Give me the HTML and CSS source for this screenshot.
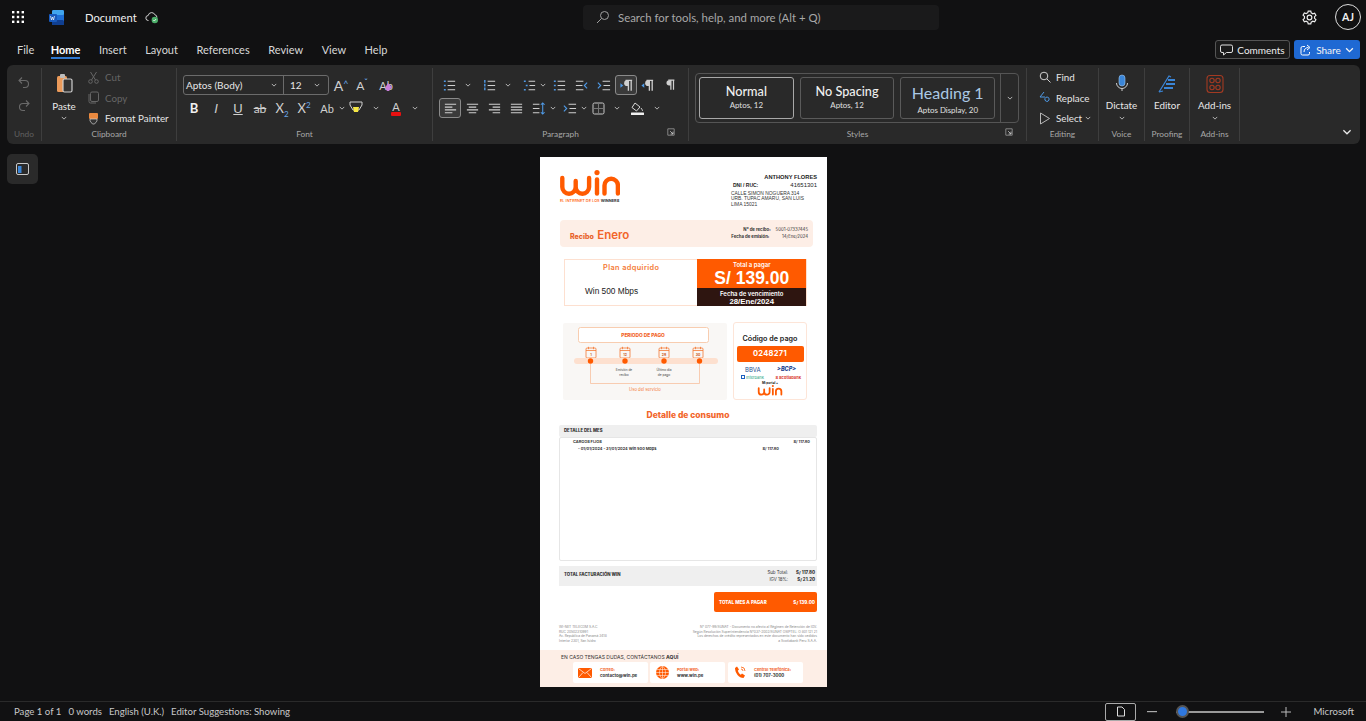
FILE: index.html
```html
<!DOCTYPE html>
<html lang="en">
<head>
	<meta charset="UTF-8">
	<title>Document</title>
	<link rel="stylesheet" href="styles.css">
</head>
<body>
	<svg class="sprite" aria-hidden="true">
		<symbol id="chev" viewBox="0 0 8 5"><path d="M1 1l3 3 3-3" fill="none" stroke="currentColor" stroke-width="1.1"/></symbol>
		<symbol id="list" viewBox="0 0 16 16"><g fill="none" stroke-width="1.2"><path d="M6 3.5h8M6 8h8M6 12.5h8" stroke="#cfcfcf"/><path d="M2 3.5h2M2 8h2M2 12.5h2" stroke="#4f9be8" stroke-width="1.6"/></g></symbol>
		<symbol id="numlist" viewBox="0 0 16 16"><g fill="none" stroke-width="1.2"><path d="M6 3.5h8M6 8h8M6 12.5h8" stroke="#cfcfcf"/><path d="M3 2v12" stroke="#4f9be8" stroke-width="1.5" stroke-dasharray="3 1"/></g></symbol>
		<symbol id="multi" viewBox="0 0 16 16"><g fill="none" stroke-width="1.2"><path d="M7 3.5h7M8 8h6M7 12.5h7" stroke="#cfcfcf"/><path d="M2 3.5h2M4 8h2M2 12.5h2" stroke="#4f9be8" stroke-width="1.5"/></g></symbol>
		<symbol id="outdent" viewBox="0 0 16 16"><g fill="none" stroke-width="1.2"><path d="M2 3.5h8M2 8h7M2 12.5h8" stroke="#cfcfcf"/><path d="M14 5l-3 3 3 3" stroke="#4f9be8"/></g></symbol>
		<symbol id="indent" viewBox="0 0 16 16"><g fill="none" stroke-width="1.2"><path d="M7 3.5h8M8 8h7M7 12.5h8" stroke="#cfcfcf"/><path d="M2 5l3 3-3 3" stroke="#4f9be8"/></g></symbol>
		<symbol id="pilcrow" viewBox="0 0 16 16"><path d="M6 2.5h7M9 2.5v11M12 2.5v11" fill="none" stroke="#cfcfcf" stroke-width="1.4"/><path d="M9 2.5H7a3 3 0 0 0 0 6h2z" fill="#cfcfcf"/></symbol>
		<symbol id="pil-ltr" viewBox="0 0 16 16"><path d="M7 2.5h7M10 2.5v11M13 2.5v11" fill="none" stroke="#cfcfcf" stroke-width="1.4"/><path d="M10 2.5H8.500a3 3 0 0 0 0 6H10z" fill="#cfcfcf"/><path d="M1.500 5.500l3 2.500-3 2.500z" fill="#4f9be8"/></symbol>
		<symbol id="pil-rtl" viewBox="0 0 16 16"><path d="M7 2.5h7M10 2.5v11M13 2.5v11" fill="none" stroke="#cfcfcf" stroke-width="1.4"/><path d="M10 2.5H8.500a3 3 0 0 0 0 6H10z" fill="#cfcfcf"/><path d="M4.500 5.500l-3 2.500 3 2.500z" fill="#4f9be8"/></symbol>
		<symbol id="left" viewBox="0 0 16 16"><path d="M2 3.5h12M2 6.5h8M2 9.5h12M2 12.5h8" fill="none" stroke="#cfcfcf" stroke-width="1.2"/></symbol>
		<symbol id="center" viewBox="0 0 16 16"><path d="M2 3.5h12M4 6.5h8M2 9.5h12M4 12.5h8" fill="none" stroke="#cfcfcf" stroke-width="1.2"/></symbol>
		<symbol id="right" viewBox="0 0 16 16"><path d="M2 3.5h12M6 6.5h8M2 9.5h12M6 12.5h8" fill="none" stroke="#cfcfcf" stroke-width="1.2"/></symbol>
		<symbol id="justify" viewBox="0 0 16 16"><path d="M2 3.5h12M2 6.5h12M2 9.5h12M2 12.5h12" fill="none" stroke="#cfcfcf" stroke-width="1.2"/></symbol>
		<symbol id="launch" viewBox="0 0 10 10"><path d="M1 1h8v8H1z" fill="none" stroke="#9a9a9a"/><path d="M4 4l3.5 3.5M7.500 4.500v3h-3" fill="none" stroke="#d0d0d0"/></symbol>
		<symbol id="logo" viewBox="0 0 60 27"><g fill="none" stroke="#ff5a00" stroke-width="4.4" stroke-linecap="round"><path d="M2.300 8v9a6.700 6.700 0 0 0 13.400 0V11M15.700 17a6.700 6.700 0 0 0 13.400 0V8"/><path d="M37 9.500v14"/><path d="M44.500 23.500V15.500a6.700 6.700 0 0 1 13.400 0v8"/></g><circle cx="37" cy="2.600" r="2.600" fill="#ff5a00"/></symbol>
		<symbol id="cal" viewBox="0 0 12 13"><g fill="none" stroke="#f47a35" stroke-width=".8"><rect x="1" y="2" width="10" height="10" rx="1"/><path d="M1 4.500h10M3.500 .8v2.400M8.500 .8v2.400"/></g></symbol>
	</svg>

	<div class="app">
		<header class="topbar">
			<svg class="waffle" width="12" height="12" viewBox="0 0 12 12" fill="#fff"><rect width="2.400" height="2.400"/><rect x="4.800" width="2.400" height="2.400"/><rect x="9.600" width="2.400" height="2.400"/><rect y="4.800" width="2.400" height="2.400"/><rect x="4.800" y="4.800" width="2.400" height="2.400"/><rect x="9.600" y="4.800" width="2.400" height="2.400"/><rect y="9.600" width="2.400" height="2.400"/><rect x="4.800" y="9.600" width="2.400" height="2.400"/><rect x="9.600" y="9.600" width="2.400" height="2.400"/></svg>
			<svg class="wordmark" width="15" height="15" viewBox="0 0 15 15"><rect x="3" y="0" width="12" height="15" rx="1.500" fill="#1f6fd6"/><rect x="3" y="0" width="12" height="5" rx="1.500" fill="#41a5ee"/><rect x="3" y="10" width="12" height="5" rx="1.500" fill="#103f91"/><rect x="0" y="4" width="8" height="8" rx="1" fill="#185abd"/><path d="M1.500 6l1 4 1-3 1 3 1-4" fill="none" stroke="#fff" stroke-width=".7"/></svg>
			<span class="docname">Document</span>
			<svg class="cloud" width="14" height="13" viewBox="0 0 14 13"><path d="M3.500 9.500a2.500 2.500 0 0 1-.3-5 3.500 3.500 0 0 1 6.700-.7 2.500 2.500 0 0 1 2 2.700" fill="none" stroke="#d0d0d0"/><circle cx="9.800" cy="9" r="3.200" fill="#4caf6a"/><path d="M8.300 9l1 1 1.800-2" fill="none" stroke="#fff" stroke-width=".8"/></svg>
			<div class="search">
				<svg width="14" height="14" viewBox="0 0 14 14" fill="none" stroke="#a0a0a0" stroke-width="1"><circle cx="8.500" cy="5.500" r="4"/><path d="M5.500 8.500L1 13"/></svg>
				<span>Search for tools, help, and more (Alt + Q)</span>
			</div>
			<svg class="gear" width="15" height="15" viewBox="0 0 14 14" fill="none" stroke="#eee" stroke-width="1.100"><circle cx="7" cy="7" r="2.200"/><path d="M5.800 1h2.400l.4 1.700 1.500.8 1.700-.5 1.200 2-1.300 1.200v1.600l1.300 1.200-1.200 2-1.700-.5-1.500.8-.4 1.700H5.800l-.4-1.700-1.500-.8-1.700.5-1.200-2 1.300-1.200V6L1 4.800l1.200-2 1.700.5 1.500-.8z"/></svg>
			<div class="avatar">AJ</div>
		</header>

		<nav class="tabsbar">
			<span class="tab tab-file">File</span>
			<span class="tab active">Home</span>
			<span class="tab">Insert</span>
			<span class="tab">Layout</span>
			<span class="tab">References</span>
			<span class="tab">Review</span>
			<span class="tab">View</span>
			<span class="tab">Help</span>
			<button type="button" class="comments">
				<svg width="13" height="12" viewBox="0 0 13 12" fill="none" stroke="#e0e0e0"><path d="M2 1h9a1.500 1.500 0 0 1 1.500 1.500v4.500a1.500 1.500 0 0 1-1.500 1.500H6.500L3.500 11V8.500H2A1.500 1.500 0 0 1 .5 7V2.500A1.500 1.500 0 0 1 2 1z"/></svg>
				Comments
			</button>
			<button type="button" class="share">
				<svg width="12" height="12" viewBox="0 0 12 12" fill="none" stroke="#fff"><path d="M5 2.500H2.500A1.500 1.500 0 0 0 1 4v5.500A1.500 1.500 0 0 0 2.500 11H8a1.500 1.500 0 0 0 1.500-1.500V8M4 8c0-3 2-4.500 4.500-4.500M7 1l3 2.500L7 6"/></svg>
				Share
				<svg width="9" height="6" viewBox="0 0 8 5"><use href="#chev"/></svg>
			</button>
		</nav>

		<section class="ribbon">
			<div class="group g-undo">
				<div class="stack">
					<svg width="14" height="14" viewBox="0 0 14 14" fill="none" stroke="#6a6a6a" stroke-width="1.100"><path d="M5 1.500L2 4.500l3 3M2 4.500h6a3.500 3.500 0 0 1 0 7H6"/></svg>
					<svg width="14" height="14" viewBox="0 0 14 14" fill="none" stroke="#6a6a6a" stroke-width="1.100"><path d="M9 1.500l3 3-3 3M12 4.500H6a3.500 3.500 0 0 0 0 7h2"/></svg>
				</div>
				<div class="glabel dim">Undo</div>
			</div>

			<div class="group g-clip">
				<div class="clipbody">
					<div class="bigbtn paste">
						<svg width="17" height="20" viewBox="0 0 17 20"><rect x="1" y="2" width="10" height="16" rx="1.500" fill="#eb9a5a"/><rect x="4" y="0" width="5" height="4" rx="1" fill="#bdbdbd"/><rect x="7" y="5" width="9" height="13" rx="1.500" fill="#333" stroke="#cfcfcf" stroke-width="1.200"/></svg>
						<span>Paste</span>
						<svg class="chev" viewBox="0 0 8 5"><use href="#chev"/></svg>
					</div>
					<div class="cliplist">
						<div class="clipitem dim">
							<svg width="11" height="13" viewBox="0 0 11 13" fill="none" stroke="#666"><circle cx="2.500" cy="10.500" r="1.800"/><circle cx="8.500" cy="10.500" r="1.800"/><path d="M3.500 9L8.500 1M7.500 9L2.500 1"/></svg>
							<span>Cut</span>
						</div>
						<div class="clipitem dim">
							<svg width="11" height="13" viewBox="0 0 11 13" fill="none" stroke="#666"><rect x="2.500" y="1" width="8" height="9.500" rx="1.500"/><path d="M1 3v7.500A1.500 1.500 0 0 0 2.500 12H8"/></svg>
							<span>Copy</span>
						</div>
						<div class="clipitem">
							<svg width="11" height="13" viewBox="0 0 11 13"><rect x="1" y="1" width="9" height="6" rx="1" fill="#e9893f"/><path d="M2 7h7v2L6.500 12H4.500L2 9z" fill="#333" stroke="#cfcfcf" stroke-width=".7"/></svg>
							<span>Format Painter</span>
						</div>
					</div>
				</div>
				<div class="glabel">Clipboard</div>
			</div>

			<div class="group g-font">
				<div class="row">
					<div class="fontbox">
						<span class="fname">Aptos (Body)</span>
						<svg class="chev" viewBox="0 0 8 5"><use href="#chev"/></svg>
						<span class="fsize">12</span>
						<svg class="chev" viewBox="0 0 8 5"><use href="#chev"/></svg>
					</div>
					<span class="cell w22"><span class="txt-a">A<i class="sup-b">^</i></span></span>
					<span class="cell w22"><span class="txt-a small">A<i class="sup-b low">ˇ</i></span></span>
					<span class="cell w22 clear-fmt"><span class="txt-s">Ab</span><svg class="eraser" width="8" height="8" viewBox="0 0 8 8"><path d="M4 0l4 4-3 4H3L1 5z" fill="#c77fd8"/></svg></span>
				</div>
				<div class="row">
					<span class="cell w22"><b class="txt-b">B</b></span>
					<span class="cell w22"><i class="txt-i">I</i></span>
					<span class="cell w22"><u class="txt-u">U</u></span>
					<span class="cell w22"><s class="txt-st">ab</s></span>
					<span class="cell w22"><span class="txt-x">X<sub>2</sub></span></span>
					<span class="cell w22"><span class="txt-x">X<sup>2</sup></span></span>
					<span class="cell w22 ml1"><span class="txt-s">Ab</span></span>
					<span class="cell w7"><svg class="chev" viewBox="0 0 8 5"><use href="#chev"/></svg></span>
					<span class="cell w22">
						<svg width="14" height="15" viewBox="0 0 14 15"><path d="M1 1h12v3l-3 5H4L1 4z" fill="none" stroke="#d0d0d0"/><path d="M4 6h6l-1 5H5z" fill="#f5e642"/></svg>
					</span>
					<span class="cell w16 ml1"><svg class="chev" viewBox="0 0 8 5"><use href="#chev"/></svg></span>
					<span class="cell w22 ml1 fontcolor"><span class="txt-s">A</span><i class="redbar"></i></span>
					<span class="cell w16"><svg class="chev" viewBox="0 0 8 5"><use href="#chev"/></svg></span>
				</div>
				<div class="glabel">Font</div>
			</div>

			<div class="group g-para">
				<div class="row">
					<span class="cell w22"><svg width="15" height="15"><use href="#list"/></svg></span>
					<span class="cell w16"><svg class="chev" viewBox="0 0 8 5"><use href="#chev"/></svg></span>
					<span class="cell w22 ml2"><svg width="15" height="15"><use href="#numlist"/></svg></span>
					<span class="cell w16"><svg class="chev" viewBox="0 0 8 5"><use href="#chev"/></svg></span>
					<span class="cell w20 ml3"><svg width="15" height="15"><use href="#multi"/></svg></span>
					<span class="cell w7"><svg class="chev" viewBox="0 0 8 5"><use href="#chev"/></svg></span>
					<span class="cell w22 ml2"><svg width="15" height="15"><use href="#list"/></svg></span>
					<span class="cell w22"><svg width="15" height="15"><use href="#outdent"/></svg></span>
					<span class="cell w22"><svg width="15" height="15"><use href="#indent"/></svg></span>
					<span class="cell w22 ml1 on"><svg width="15" height="15"><use href="#pil-ltr"/></svg></span>
					<span class="cell w21"><svg width="15" height="15"><use href="#pil-rtl"/></svg></span>
					<span class="cell w22 ml1"><svg width="14" height="14"><use href="#pilcrow"/></svg></span>
				</div>
				<div class="row row-two">
					<span class="cell w22 on"><svg width="15" height="15"><use href="#left"/></svg></span>
					<span class="cell w22"><svg width="15" height="15"><use href="#center"/></svg></span>
					<span class="cell w22"><svg width="15" height="15"><use href="#right"/></svg></span>
					<span class="cell w22"><svg width="15" height="15"><use href="#justify"/></svg></span>
					<span class="cell w22"><svg width="15" height="15" viewBox="0 0 16 16"><path d="M2 3.500h7M2 8h7M2 12.500h7" stroke="#cfcfcf" stroke-width="1.200"/><path d="M12.500 2v12M10.500 4l2-2 2 2M10.500 12l2 2 2-2" fill="none" stroke="#4f9be8" stroke-width="1.100"/></svg></span>
					<span class="cell w7"><svg class="chev" viewBox="0 0 8 5"><use href="#chev"/></svg></span>
					<span class="cell w22 ml2"><svg width="15" height="15"><use href="#indent"/></svg></span>
					<span class="cell w7"><svg class="chev" viewBox="0 0 8 5"><use href="#chev"/></svg></span>
					<span class="cell w22"><svg width="13" height="13" viewBox="0 0 13 13"><rect x="1" y="1" width="11" height="11" rx="1.500" fill="#2c2c2c" stroke="#c8c8c8"/><path d="M6.500 1v11M1 6.500h11" stroke="#777"/></svg></span>
					<span class="cell w16"><svg class="chev" viewBox="0 0 8 5"><use href="#chev"/></svg></span>
					<span class="cell w22 ml1"><svg width="15" height="15" viewBox="0 0 15 15"><path d="M5 2l5 4-3.500 4L2 6.500z" fill="none" stroke="#d8d8d8"/><path d="M11 7c1 1.500 1.500 2 1.500 3" stroke="#d8d8d8" fill="none"/><rect x="1" y="11.500" width="13" height="2.500" rx=".5" fill="#f0f0f0"/></svg></span>
					<span class="cell w16 ml1"><svg class="chev" viewBox="0 0 8 5"><use href="#chev"/></svg></span>
				</div>
				<div class="glabel">Paragraph</div>
				<svg class="launcher" width="8" height="8"><use href="#launch"/></svg>
			</div>

			<div class="group g-styles">
				<div class="stylesbox">
					<div class="stylecard first"><div class="s-name">Normal</div><div class="s-sub">Aptos, 12</div></div>
					<div class="stylecard"><div class="s-name">No Spacing</div><div class="s-sub">Aptos, 12</div></div>
					<div class="stylecard"><div class="s-name heading">Heading 1</div><div class="s-sub">Aptos Display, 20</div></div>
					<div class="stylesmore"><svg class="chev" viewBox="0 0 8 5"><use href="#chev"/></svg></div>
				</div>
				<div class="glabel">Styles</div>
				<svg class="launcher" width="8" height="8"><use href="#launch"/></svg>
			</div>

			<div class="group g-edit">
				<div class="edititem">
					<svg width="12" height="12" viewBox="0 0 12 12" fill="none" stroke="#cfcfcf"><circle cx="5" cy="5" r="3.800"/><path d="M8 8l3.500 3.500"/></svg>
					<span>Find</span>
				</div>
				<div class="edititem">
					<svg width="12" height="13" viewBox="0 0 12 13" fill="none" stroke="#4f9be8"><path d="M5 1L1 6h5M6 7.500a2 2 0 1 0 4 1.500 2 2 0 1 0-4-1.500"/></svg>
					<span>Replace</span>
				</div>
				<div class="edititem">
					<svg width="12" height="13" viewBox="0 0 12 13" fill="none" stroke="#b8b8b8"><path d="M1.500 1v11l9-5.500z"/></svg>
					<span>Select</span>
					<svg class="chev" viewBox="0 0 8 5"><use href="#chev"/></svg>
				</div>
				<div class="glabel">Editing</div>
			</div>

			<div class="group g-big w-voice">
				<svg class="bigicon" width="16" height="20" viewBox="0 0 16 20"><rect x="5" y="1" width="6" height="11" rx="3" fill="#3b86d8" stroke="#9cc6f0" stroke-width=".6"/><path d="M2.500 9a5.500 5.500 0 0 0 11 0M8 14.500V17" fill="none" stroke="#cfcfcf"/></svg>
				<span class="bigtext">Dictate</span>
				<svg class="chev" viewBox="0 0 8 5"><use href="#chev"/></svg>
				<div class="glabel">Voice</div>
			</div>

			<div class="group g-big w-proof">
				<svg class="bigicon" width="20" height="20" viewBox="0 0 20 20"><path d="M2 18L12 2l2 1" fill="none" stroke="#3b86d8" stroke-width="1.200"/><path d="M2 18l4-1" stroke="#3b86d8" stroke-width="1.200"/><path d="M11 6h7M9 10h9M7 14h9" stroke="#3b86d8" stroke-width="2.200"/></svg>
				<span class="bigtext">Editor</span>
				<div class="glabel">Proofing</div>
			</div>

			<div class="group g-big w-addin">
				<svg class="bigicon" width="18" height="19" viewBox="0 0 18 19" fill="none" stroke="#a33a22" stroke-width="1.100"><rect x="1" y="1" width="16" height="17" rx="3"/><circle cx="6" cy="6" r="2.200"/><circle cx="12" cy="6" r="2.200"/><circle cx="6" cy="13" r="2.200"/><circle cx="12" cy="13" r="2.200"/></svg>
				<span class="bigtext">Add-ins</span>
				<svg class="chev" viewBox="0 0 8 5"><use href="#chev"/></svg>
				<div class="glabel">Add-ins</div>
			</div>

			<svg class="collapse" width="10" height="6" viewBox="0 0 8 5"><use href="#chev"/></svg>
		</section>

		<main class="workspace">
			<div class="sidebtn">
				<svg width="13" height="12" viewBox="0 0 13 12"><rect x=".5" y=".5" width="12" height="11" rx="1.500" fill="none" stroke="#c8c8c8"/><rect x="2" y="3" width="3.500" height="7" fill="#3b86d8"/></svg>
			</div>

			<article class="doc">
				<div class="doc-head">
					<div class="brand">
						<svg class="brand-logo" width="60" height="27"><use href="#logo"/></svg>
						<div class="tagline">EL INTERNET DE LOS <b>WINNERS</b></div>
					</div>
					<div class="client">
						<div class="client-name">ANTHONY FLORES</div>
						<div class="client-id"><b>DNI / RUC:</b><span>41651301</span></div>
						<div class="client-addr">CALLE SIMON NOGUERA 314<br>URB. TUPAC AMARU, SAN LUIS<br>LIMA 15021</div>
					</div>
				</div>

				<div class="receipt">
					<div class="receipt-title"><span class="r-small">Recibo</span> <span class="r-big">Enero</span></div>
					<table class="receipt-meta">
						<tr><th>N° de recibo:</th><td>5001-07337445</td></tr>
						<tr><th>Fecha de emisión:</th><td>14/Ene/2024</td></tr>
					</table>
				</div>

				<div class="plan">
					<div class="plan-left">
						<div class="plan-title">Plan adquirido</div>
						<div class="plan-name">Win 500 Mbps</div>
					</div>
					<div class="plan-right">
						<div class="pay">
							<div class="pay-label">Total a pagar</div>
							<div class="pay-amount">S/ 139.00</div>
						</div>
						<div class="due">
							<div class="due-label">Fecha de vencimiento</div>
							<div class="due-date">28/Ene/2024</div>
						</div>
					</div>
				</div>

				<div class="payrow">
					<svg class="period" width="164" height="77" viewBox="0 0 164 77">
						<rect x="15.500" y="4.500" width="130" height="15" rx="2" fill="#fff" stroke="#f8cdb0"/>
						<text class="p-title" x="80" y="13.800">PERIODO DE PAGO</text>
						<use href="#cal" x="22" y="23" width="12" height="13"/>
						<use href="#cal" x="56" y="23" width="12" height="13"/>
						<use href="#cal" x="95" y="23" width="12" height="13"/>
						<use href="#cal" x="129" y="23" width="12" height="13"/>
						<text class="p-day" x="28" y="32.500">1</text>
						<text class="p-day" x="62" y="32.500">12</text>
						<text class="p-day" x="101" y="32.500">28</text>
						<text class="p-day" x="135" y="32.500">30</text>
						<rect x="11" y="35" width="144" height="6" rx="3" fill="#fde0cf"/>
						<path d="M27.500 41V60.500H136.500V41" fill="none" stroke="#f8c0a0" stroke-width=".8"/>
						<circle cx="27.500" cy="38" r="2.700" fill="#ff5a00"/>
						<circle cx="62" cy="38" r="2.700" fill="#ff5a00"/>
						<circle cx="101" cy="38" r="2.700" fill="#ff5a00"/>
						<circle cx="136.500" cy="38" r="2.700" fill="#ff5a00"/>
						<text class="p-note" x="61" y="48">Emisión de</text>
						<text class="p-note" x="61" y="53">recibo</text>
						<text class="p-note" x="101" y="48">Último día</text>
						<text class="p-note" x="101" y="53">de pago</text>
						<text class="p-use" x="82" y="67.500">Uso del servicio</text>
					</svg>
					<div class="code">
						<div class="code-title">Código de pago</div>
						<div class="code-value">0248271</div>
						<div class="banks banks-top">
							<span class="bbva">BBVA</span><span class="bcp">&gt;BCP&gt;</span>
						</div>
						<div class="banks">
							<span class="interbank"><i></i>Interbank</span><span class="scotia">S Scotiabank</span>
						</div>
						<div class="portal">Mi portal +</div>
						<svg class="portal-logo" width="26" height="11"><use href="#logo"/></svg>
					</div>
				</div>

				<h2 class="detail-title">Detalle de consumo</h2>
				<div class="detail-head">DETALLE DEL MES</div>
				<div class="detail-box">
					<div class="line-fixed"><span>CARGOS FIJOS</span><span>S/ 117.80</span></div>
					<div class="line-item"><span>- 01/01/2024 - 31/01/2024 Win 500 Mbps</span><span>S/ 117.80</span></div>
				</div>

				<div class="billing">
					<div class="billing-name">TOTAL FACTURACIÓN WIN</div>
					<table class="billing-sums">
						<tr><th>Sub Total:</th><td>S/ 117.80</td></tr>
						<tr><th>IGV 18%:</th><td>S/ 21.20</td></tr>
					</table>
				</div>
				<div class="grand">
					<span>TOTAL MES A PAGAR</span><span>S/ 139.00</span>
				</div>

				<div class="legal">
					<div>WI-NET TELECOM S.A.C<br>RUC 20502310991<br>Av. Republica de Panamá 3418<br>Interior 2301, San Isidro</div>
					<div class="legal-right">N° 077-99/SUNAT - Documento no afecto al Régimen de Retención de IGV.<br>Según Resolución Superintendencia N°037-2002/SUNAT OSIPTEL: O 801 121 21<br>Los derechos de crédito representados en este documento han sido cedidos<br>a Scotiabank Peru S.A.A.</div>
				</div>

				<div class="contact">
					<div class="contact-title">EN CASO TENGAS DUDAS, CONTÁCTANOS <b>AQUÍ</b></div>
					<div class="contact-cards">
						<div class="ccard">
							<svg width="14" height="10" viewBox="0 0 14 10"><rect width="14" height="10" rx="1" fill="#ff5a00"/><path d="M.5 .5L7 5.500 13.500 .5M.5 9.500l4.500-5M13.500 9.500L9 4.500" fill="none" stroke="#fff" stroke-width=".7"/></svg>
							<div><div class="c-label">Correo:</div><div class="c-value">contacto@win.pe</div></div>
						</div>
						<div class="ccard">
							<svg width="13" height="13" viewBox="0 0 13 13"><circle cx="6.500" cy="6.500" r="6.500" fill="#ff5a00"/><path d="M0 6.500h13M1 3.500h11M1 9.500h11M6.500 0v13M6.500 0c-4 3-4 10 0 13M6.500 0c4 3 4 10 0 13" fill="none" stroke="#fff" stroke-width=".5"/></svg>
							<div><div class="c-label">Portal web:</div><div class="c-value">www.win.pe</div></div>
						</div>
						<div class="ccard">
							<svg width="12" height="13" viewBox="0 0 12 13"><path d="M1 2l2-1.500 2 3-1.200 1.200c.5 1.500 1.500 3 3 4L8 7.500l3 2L9.500 12C5 12 1 7 1 2z" fill="#ff5a00"/><path d="M7 1a4 4 0 0 1 4 4M7 3a2 2 0 0 1 2 2" fill="none" stroke="#ff5a00" stroke-width=".8"/></svg>
							<div><div class="c-label">Central Telefónica:</div><div class="c-value">(01) 707-3000</div></div>
						</div>
					</div>
				</div>
			</article>
		</main>

		<footer class="statusbar">
			<div class="status-left">
				<span>Page 1 of 1</span>
				<span>0 words</span>
				<span>English (U.K.)</span>
				<span>Editor Suggestions: Showing</span>
			</div>
			<div class="status-right">
				<div class="viewbtn">
					<svg width="10" height="11" viewBox="0 0 10 11" fill="none" stroke="#ddd"><path d="M1.500 1h4.500L8.500 3.500V10h-7z"/></svg>
				</div>
				<svg class="minus" width="10" height="2"><rect width="10" height="1.200" fill="#aaa"/></svg>
				<div class="slider"><i class="thumb"></i></div>
				<svg class="plus" width="10" height="10" viewBox="0 0 11 11"><path d="M5.500 0v11M0 5.500h11" stroke="#bbb" stroke-width="1.100"/></svg>
				<span class="msft">Microsoft</span>
			</div>
		</footer>
	</div>
</body>
</html>
```

FILE: styles.css
```css
*{
	box-sizing: border-box;
	padding: 0;
	margin: 0;
}
body{
	background-color: #111112;
	color: #e6e6e6;
	font-family: Lato, "Liberation Sans", sans-serif;
	overflow: hidden;
}
.sprite{
	width: 0;
	height: 0;
	display: block;
}
svg{
	display: block;
	flex: none;
}
svg.chev{
	width: 6px;
	height: 4px;
	color: #d0d0d0;
}
.app{
	width: 1366px;
	height: 721px;
	display: flex;
	flex-direction: column;
}
.dim{
	color: #666;
}

/* top bar */
.topbar{
	height: 34px;
	display: flex;
	align-items: center;
	padding-left: 12px;
}
.wordmark{
	margin-left: 25px;
}
.docname{
	width: 52px;
	margin-left: 21px;
	font-size: 11.200px;
	color: #f0f0f0;
}
.cloud{
	margin-left: 8px;
}
.search{
	width: 356px;
	height: 25px;
	margin-left: 424px;
	padding-left: 13px;
	display: flex;
	align-items: center;
	gap: 8px;
	background-color: #1a1a1b;
	border-radius: 4px;
	color: #a8a8a8;
	font-size: 11.400px;
}
.gear{
	margin-left: 363px;
}
.avatar{
	width: 26px;
	height: 26px;
	margin-left: 18px;
	border: 1px solid #ddd;
	border-radius: 50%;
	display: flex;
	align-items: center;
	justify-content: center;
	font-size: 10.500px;
	font-weight: 700;
	color: #f0f0f0;
}

/* tabs */
.tabsbar{
	height: 31px;
	display: flex;
	align-items: center;
	gap: 18.500px;
	padding-left: 17px;
	font-size: 11px;
	color: #d8d8d8;
}
.tab{
	position: relative;
	margin-top: -1px;
}
.tab-file{
	margin-right: -2px;
}
.tab.active{
	color: #fff;
	font-weight: 700;
}
.tab.active::after{
	content: "";
	position: absolute;
	left: 0;
	right: 0;
	bottom: -3px;
	height: 2px;
	background-color: #2f78d0;
}
.comments, .share{
	height: 19px;
	display: flex;
	align-items: center;
	justify-content: center;
	gap: 4px;
	border-radius: 3px;
	font-family: inherit;
	font-size: 10px;
	color: #eee;
}
.comments{
	width: 75px;
	margin-left: auto;
	background-color: #1a1a1a;
	border: 1px solid #555;
}
.share{
	width: 66px;
	margin: 0 6px 0 -14.500px;
	background-color: #1f69d3;
	border: none;
	color: #f4f4f4;
}

/* ribbon */
.ribbon{
	height: 79px;
	margin: 0 6px 0 7px;
	padding: 3px 0;
	display: flex;
	position: relative;
	background-color: #292929;
	border-radius: 6px;
	font-size: 9.800px;
}
.group{
	position: relative;
	height: 73px;
	padding-top: 7px;
	border-right: 1px solid #3e3e3e;
	display: flex;
	flex-direction: column;
}
.glabel{
	position: absolute;
	left: 0;
	right: 0;
	bottom: 0;
	height: 14px;
	line-height: 14px;
	text-align: center;
	font-size: 8.300px;
	color: #a8a8a8;
}
.glabel.dim{
	color: #606060;
}
.launcher{
	position: absolute;
	bottom: 5px;
	right: 13px;
}
.row{
	height: 20px;
	display: flex;
	align-items: center;
	margin-bottom: 3px;
}
.cell{
	height: 20px;
	display: flex;
	align-items: center;
	justify-content: center;
	color: #d0d0d0;
	position: relative;
	flex: none;
}
.cell.on{
	border: 1px solid #8a8a8a;
	border-radius: 3px;
	background-color: #3a3a3a;
}
.w22{ width: 22px; }
.w21{ width: 21px; }
.w20{ width: 20px; }
.w16{ width: 16px; }
.w7{ width: 7px; }
.ml1{ margin-left: 1px; }
.ml2{ margin-left: 2px; }
.ml3{ margin-left: 3px; }

.g-undo{
	width: 35px;
}
.stack{
	display: flex;
	flex-direction: column;
	align-items: center;
	gap: 9px;
	padding-top: 1px;
}
.g-clip{
	width: 135px;
	padding-top: 0;
}
.clipbody{
	display: flex;
	padding-left: 8px;
}
.bigbtn{
	width: 28px;
	display: flex;
	flex-direction: column;
	align-items: center;
	padding-top: 6px;
	color: #e8e8e8;
}
.paste span{
	margin-top: 6px;
}
.paste .chev{
	margin-top: 4px;
}
.cliplist{
	margin-left: 10px;
	margin-top: -1px;
}
.clipitem{
	height: 20.500px;
	display: flex;
	align-items: center;
	gap: 6px;
	white-space: nowrap;
}
.g-font{
	width: 256px;
	padding-left: 6px;
}
.fontbox{
	width: 146px;
	height: 20px;
	flex: none;
	display: flex;
	align-items: center;
	border: 1px solid #6b6b6b;
	border-radius: 3px;
	font-size: 10px;
}
.fname{
	width: 87px;
	padding-left: 2px;
}
.fsize{
	width: 31px;
	margin-left: 6px;
	padding-left: 6px;
	border-left: 1px solid #6b6b6b;
	line-height: 18px;
}
.fontbox + .cell{
	margin-left: 1px;
}
.fontbox + .cell + .cell{
	margin-left: -1px;
}
.clear-fmt{
	margin-left: 2px;
}
.txt-a{
	font-size: 14px;
}
.txt-a.small{
	font-size: 12px;
}
.sup-b{
	font-style: normal;
	font-size: 9px;
	color: #6aa8ea;
	vertical-align: 4px;
}
.txt-s{
	font-size: 11px;
}
.eraser{
	position: absolute;
	right: 5px;
	bottom: 4px;
}
.txt-b{
	font-size: 13px;
	color: #f0f0f0;
}
.txt-i, .txt-u{
	font-size: 13px;
	font-family: "Liberation Sans", sans-serif;
}
.txt-st{
	font-size: 12px;
}
.txt-x{
	font-size: 13px;
}
.txt-x sub, .txt-x sup{
	font-size: 8px;
	line-height: 0;
	color: #6aa8ea;
}
.fontcolor .txt-s{
	margin-top: -4px;
}
.redbar{
	position: absolute;
	left: 6px;
	bottom: 2px;
	width: 10px;
	height: 4px;
	background-color: #e81010;
	border-radius: 1px;
}
.g-para{
	width: 256px;
	padding-left: 5px;
}
.row-two{
	padding-left: 1px;
}
.g-styles{
	width: 338px;
	padding: 5px 0 0 6px;
}
.stylesbox{
	width: 324px;
	height: 50px;
	padding: 3px 0 0 3px;
	display: flex;
	gap: 6px;
	border: 1px solid #555;
	border-radius: 4px;
}
.stylecard{
	width: 95px;
	height: 42px;
	border: 1px solid #5a5a5a;
	border-radius: 3px;
	text-align: center;
}
.stylecard.first{
	border-color: #a8a8a8;
}
.s-name{
	margin-top: 5px;
	font-size: 12.700px;
	font-weight: 500;
	line-height: 17px;
	color: #f0f0f0;
}
.s-name.heading{
	margin-top: 3px;
	font-size: 16px;
	font-weight: 400;
	line-height: 24px;
	color: #a9c8e4;
}
.s-sub{
	font-size: 7.900px;
	line-height: 11px;
	color: #e0e0e0;
}
.stylesmore{
	width: 18px;
	height: 48px;
	margin: -3px 0 0 -1px;
	border-left: 1px solid #555;
	display: flex;
	align-items: center;
	justify-content: center;
}
.g-edit{
	width: 72px;
	padding-top: 0;
	padding-left: 12px;
}
.edititem{
	height: 20.500px;
	display: flex;
	align-items: center;
	gap: 5px;
	position: relative;
	top: -1px;
}
.edititem .chev{
	margin-left: -2px;
}
.g-big{
	align-items: center;
	padding-top: 6px;
}
.w-voice{
	width: 46px;
}
.w-proof{
	width: 45px;
}
.w-addin{
	width: 50px;
}
.bigicon{
	height: 20px;
}
.bigtext{
	margin-top: 4px;
	line-height: 14px;
	color: #e8e8e8;
}
.g-big .chev{
	margin-top: 4px;
}
.collapse{
	position: absolute;
	right: 8px;
	bottom: 9px;
}

/* workspace */
.workspace{
	flex: 1;
	display: flex;
	align-items: flex-start;
	padding: 10px 0 0 7px;
}
.sidebtn{
	width: 31px;
	height: 30px;
	background-color: #2a2a2a;
	border-radius: 5px;
	display: flex;
	align-items: center;
	justify-content: center;
}
.doc{
	width: 287px;
	height: 530px;
	margin: 3px 0 0 502px;
	display: flex;
	flex-direction: column;
	background-color: #fff;
	color: #222;
	font-family: Inter, "Liberation Sans", sans-serif;
}
.doc-head{
	height: 63px;
	flex: none;
	padding: 13px 10px 0 20px;
	display: flex;
	justify-content: space-between;
}
.brand-logo{
	margin-bottom: 1px;
}
.tagline{
	margin-top: 1px;
	font-size: 3.900px;
	line-height: 5px;
	font-weight: 500;
	color: #ff5a00;
	white-space: nowrap;
}
.tagline b{
	color: #333;
}
.client{
	width: 86px;
	padding-top: 4px;
	font-family: "Liberation Sans", sans-serif;
	font-size: 5px;
}
.client-name{
	text-align: right;
	font-weight: 700;
	font-size: 5.700px;
	line-height: 7px;
}
.client-id{
	display: flex;
	justify-content: space-between;
	padding-left: 2px;
	line-height: 8px;
}
.client-id span{
	font-size: 6px;
}
.client-addr{
	margin-top: 1.500px;
	font-size: 4.900px;
	line-height: 5.700px;
	color: #333;
}
.receipt{
	width: 253px;
	height: 27px;
	flex: none;
	margin-left: 20px;
	padding: 0 5px 0 10px;
	display: flex;
	align-items: center;
	justify-content: space-between;
	background-color: #fdeee6;
	border-radius: 4px;
}
.receipt-title{
	margin-top: -2px;
}
.r-small{
	font-size: 7px;
	font-weight: 800;
	color: #e8622a;
}
.r-big{
	margin-left: -1px;
	font-size: 11.500px;
	font-weight: 600;
	color: #f2652a;
}
.receipt-meta, .billing-sums{
	border-collapse: collapse;
}
.receipt-meta{
	font-size: 4.300px;
	line-height: 6.500px;
	color: #333;
}
.receipt-meta th, .billing-sums th{
	font-weight: 700;
	text-align: right;
}
.receipt-meta td, .billing-sums td{
	text-align: right;
	padding-left: 5px;
}
.receipt-meta th{
	text-align: left;
}
.receipt-meta tr:first-child th{
	padding-left: 12px;
}
.plan{
	width: 243px;
	height: 47px;
	flex: none;
	margin: 12px 0 0 24px;
	display: flex;
	border: 1px solid #fde0d0;
}
.plan-left{
	width: 133px;
}
.plan-title{
	margin-top: 3px;
	text-align: center;
	font-size: 7.300px;
	font-weight: 600;
	line-height: 9px;
	letter-spacing: .4px;
	color: #f47a35;
}
.plan-name{
	margin: 14px 0 0 20px;
	font-family: "Liberation Sans", sans-serif;
	font-size: 8.300px;
	line-height: 10px;
}
.plan-right{
	width: 109px;
	margin: -1px 0;
	color: #fff;
	text-align: center;
	display: flex;
	flex-direction: column;
}
.pay{
	height: 29px;
	background-color: #ff5a00;
}
.pay-label{
	padding-top: 2px;
	font-size: 6px;
	font-weight: 600;
	line-height: 8px;
}
.pay-amount{
	font-family: "Liberation Sans", sans-serif;
	font-size: 17.500px;
	font-weight: 700;
	line-height: 18px;
}
.due{
	flex: 1;
	background-color: #2e1510;
}
.due-label{
	padding-top: 2px;
	font-size: 6px;
	font-weight: 600;
	line-height: 7px;
}
.due-date{
	font-family: "Liberation Sans", sans-serif;
	font-size: 7.800px;
	font-weight: 700;
	line-height: 9px;
}
.payrow{
	height: 78px;
	flex: none;
	margin: 16px 0 0 23px;
	display: flex;
	gap: 6px;
}
.period{
	margin-top: 1px;
	background-color: #f9f7f5;
	border-radius: 2px;
}
.period text{
	font-family: Inter, sans-serif;
	text-anchor: middle;
}
.p-title{
	font-size: 4.800px;
	font-weight: 800;
	fill: #f2652a;
}
.p-day{
	font-size: 3.500px;
	font-weight: 700;
	fill: #c85a20;
}
.p-note{
	font-size: 3.200px;
	fill: #444;
}
.p-use{
	font-size: 4.200px;
	fill: #f47a35;
}
.code{
	width: 74px;
	height: 78px;
	padding: 0 3px;
	border: 1px solid #fde5d8;
	border-radius: 3px;
	display: flex;
	flex-direction: column;
	align-items: center;
}
.code-title{
	margin-top: 11px;
	font-size: 7.200px;
	font-weight: 600;
	line-height: 9px;
	white-space: nowrap;
}
.code-value{
	width: 67px;
	height: 16px;
	margin-top: 3px;
	flex: none;
	background-color: #ff5a00;
	border-radius: 2px;
	color: #fff;
	font-size: 7.500px;
	font-weight: 700;
	line-height: 16px;
	text-align: center;
	letter-spacing: .3px;
}
.banks{
	width: 66px;
	padding: 0 2px 0 4px;
	display: flex;
	justify-content: space-between;
	align-items: center;
	margin-top: 2px;
	height: 6px;
	font-size: 4px;
	white-space: nowrap;
}
.banks-top{
	margin-top: 4px;
	padding: 0 7px 0 8px;
}
.bbva{
	font-size: 6px;
	color: #1d4f91;
}
.bcp{
	font-size: 5.500px;
	font-style: italic;
	font-weight: 800;
	color: #1a3e8c;
}
.interbank{
	color: #1aa37a;
	display: flex;
	align-items: center;
	gap: 1px;
}
.interbank i{
	width: 4px;
	height: 4px;
	border: 1px solid #1c5fc0;
}
.scotia{
	color: #d8352a;
	font-weight: 700;
}
.portal{
	margin-top: 1px;
	font-size: 3.100px;
	font-weight: 700;
	line-height: 4px;
}
.detail-title{
	margin-top: 10px;
	padding-left: 9px;
	text-align: center;
	font-size: 8.500px;
	font-weight: 800;
	line-height: 10px;
	color: #f2652a;
}
.detail-head{
	width: 258px;
	height: 12px;
	margin: 5px 0 0 19px;
	padding-left: 5px;
	background-color: #efefef;
	border-radius: 2px;
	font-size: 4.300px;
	font-weight: 800;
	line-height: 12px;
	color: #333;
}
.detail-box{
	width: 258px;
	height: 124px;
	margin-left: 19px;
	padding-top: 1px;
	border: 1px solid #e6e6e6;
	border-radius: 2px;
	font-size: 3.900px;
	font-weight: 700;
	color: #333;
}
.line-fixed{
	display: flex;
	justify-content: space-between;
	padding: 0 6px 0 13px;
	line-height: 6px;
}
.line-item{
	display: flex;
	justify-content: space-between;
	padding: 0 37px 0 18px;
	margin-top: 1px;
	line-height: 6px;
}
.billing{
	width: 258px;
	height: 20px;
	margin: 5px 0 0 19px;
	padding: 0 2px 0 5px;
	display: flex;
	justify-content: space-between;
	align-items: center;
	background-color: #efefef;
	font-size: 4.300px;
	font-weight: 800;
	color: #333;
}
.billing-name{
	margin-top: -3px;
}
.billing-sums{
	font-size: 4.400px;
	line-height: 7.500px;
}
.billing-sums th{
	font-weight: 400;
}
.billing-sums td{
	padding-left: 8px;
	font-weight: 800;
}
.grand{
	width: 103px;
	height: 20px;
	margin: 6px 0 0 174px;
	padding: 0 2px 0 5px;
	display: flex;
	justify-content: space-between;
	align-items: center;
	background-color: #ff5a00;
	border-radius: 2px;
	color: #fff;
	font-size: 4.600px;
	font-weight: 800;
}
.legal{
	width: 258px;
	margin: 13px 0 0 19px;
	display: flex;
	justify-content: space-between;
	font-size: 3.300px;
	line-height: 4.500px;
	color: #888;
}
.legal-right{
	text-align: right;
}
.contact{
	height: 37px;
	margin-top: auto;
	padding: 3px 0 0 21px;
	background-color: #fdeee6;
}
.contact-title{
	font-size: 5px;
	line-height: 8px;
	color: #333;
	white-space: nowrap;
}
.contact-cards{
	margin: 1px 0 0 12px;
	display: flex;
	gap: 2px;
}
.ccard{
	width: 75px;
	height: 21px;
	padding-left: 6px;
	display: flex;
	align-items: center;
	gap: 8px;
	background-color: #fff;
	border-radius: 2px;
}
.ccard:first-child{
	padding-left: 5px;
}
.ccard:last-child{
	margin-left: 1px;
}
.c-label{
	font-size: 4px;
	font-weight: 700;
	line-height: 6px;
	color: #f2652a;
	white-space: nowrap;
}
.c-value{
	font-size: 4.300px;
	font-weight: 700;
	line-height: 6px;
	color: #333;
	white-space: nowrap;
}

/* status bar */
.statusbar{
	height: 20px;
	flex: none;
	padding: 0 12px 0 14px;
	display: flex;
	align-items: center;
	justify-content: space-between;
	border-top: 1px solid #2a2a2a;
	font-size: 9.600px;
	color: #c8c8c8;
	white-space: nowrap;
}
.status-left{
	display: flex;
	gap: 7px;
}
.status-right{
	display: flex;
	align-items: center;
}
.viewbtn{
	width: 31px;
	height: 18px;
	border: 1px solid #aaa;
	border-radius: 2px;
	display: flex;
	align-items: center;
	justify-content: center;
}
.minus{
	margin-left: 11px;
}
.slider{
	width: 88px;
	height: 2px;
	margin-left: 19px;
	position: relative;
	background-color: #999;
}
.thumb{
	position: absolute;
	left: 0;
	top: -6px;
	width: 13px;
	height: 13px;
	border: 2px solid #555;
	border-radius: 50%;
	background-color: #2f78e0;
}
.plus{
	margin-left: 17px;
}
.msft{
	margin-left: 22px;
}
```
